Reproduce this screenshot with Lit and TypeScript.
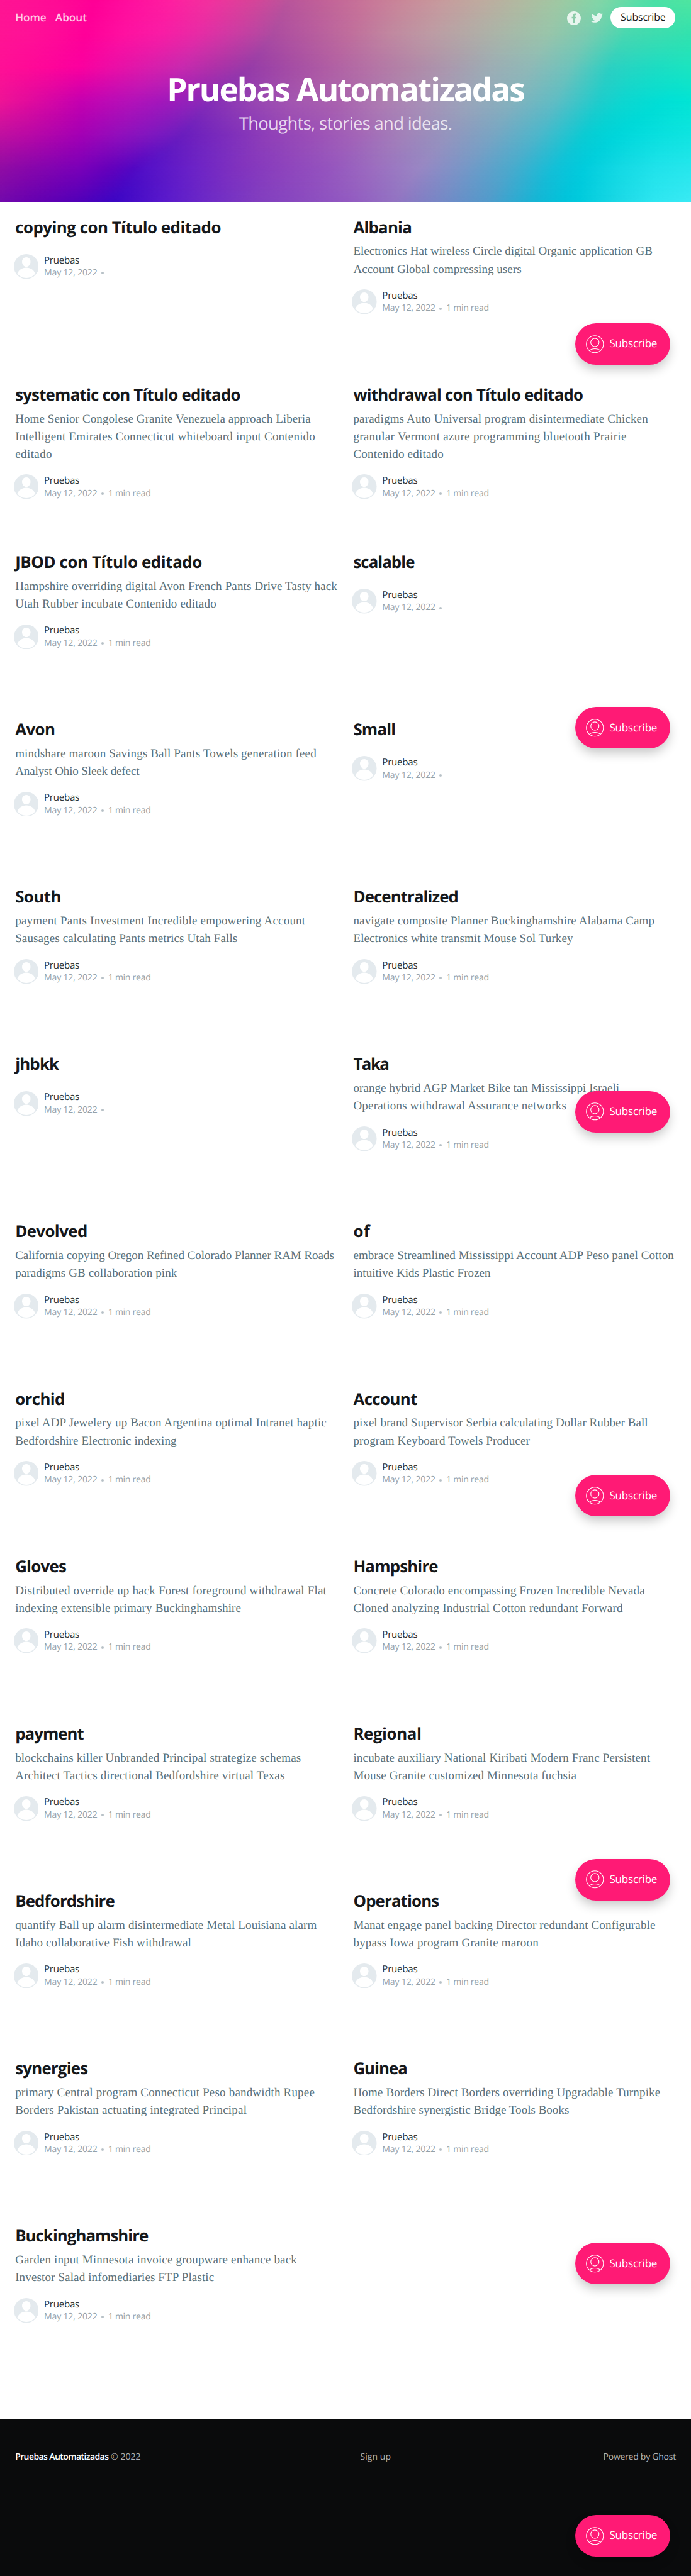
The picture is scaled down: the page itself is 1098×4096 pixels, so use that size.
import { LitElement, html, css, svg, nothing } from "lit";
import { customElement, property } from "lit/decorators.js";

/** Length of one design unit in CSS pixels. */
const UNIT = 0.732;

type Line = [text: string, width: number];
interface Post {
  title: Line;
  excerpt: Line[];
}

const posts: Post[] = [
  { title: ["copying con Título editado", 445], excerpt: [] },
  { title: ["Albania", 125], excerpt: [["Electronics Hat wireless Circle digital Organic application GB", 648], ["Account Global compressing users", 363.5]] },
  { title: ["systematic con Título editado", 487], excerpt: [["Home Senior Congolese Granite Venezuela approach Liberia", 640], ["Intelligent Emirates Connecticut whiteboard input Contenido", 650], ["editado", 79]] },
  { title: ["withdrawal con Título editado", 497], excerpt: [["paradigms Auto Universal program disintermediate Chicken", 638.5], ["granular Vermont azure programming bluetooth Prairie", 591.7], ["Contenido editado", 194.7]] },
  { title: ["JBOD con Título editado", 404], excerpt: [["Hampshire overriding digital Avon French Pants Drive Tasty hack", 697.8], ["Utah Rubber incubate Contenido editado", 435.3]] },
  { title: ["scalable", 131], excerpt: [] },
  { title: ["Avon", 85], excerpt: [["mindshare maroon Savings Ball Pants Towels generation feed", 652.4], ["Analyst Ohio Sleek defect", 268]] },
  { title: ["Small", 90], excerpt: [] },
  { title: ["South", 98], excerpt: [["payment Pants Investment Incredible empowering Account", 628.5], ["Sausages calculating Pants metrics Utah Falls", 481]] },
  { title: ["Decentralized", 226], excerpt: [["navigate composite Planner Buckinghamshire Alabama Camp", 652.4], ["Electronics white transmit Mouse Sol Turkey", 475.5]] },
  { title: ["jhbkk", 93], excerpt: [] },
  { title: ["Taka", 75], excerpt: [["orange hybrid AGP Market Bike tan Mississippi Israeli", 576], ["Operations withdrawal Assurance networks", 461]] },
  { title: ["Devolved", 155], excerpt: [["California copying Oregon Refined Colorado Planner RAM Roads", 690.7], ["paradigms GB collaboration pink", 350]] },
  { title: ["of", 35], excerpt: [["embrace Streamlined Mississippi Account ADP Peso panel Cotton", 694.5], ["intuitive Kids Plastic Frozen", 296.6]] },
  { title: ["orchid", 106], excerpt: [["pixel ADP Jewelery up Bacon Argentina optimal Intranet haptic", 674.5], ["Bedfordshire Electronic indexing", 349]] },
  { title: ["Account", 137], excerpt: [["pixel brand Supervisor Serbia calculating Dollar Rubber Ball", 638], ["program Keyboard Towels Producer", 381.7]] },
  { title: ["Gloves", 109], excerpt: [["Distributed override up hack Forest foreground withdrawal Flat", 674.5], ["indexing extensible primary Buckinghamshire", 489]] },
  { title: ["Hampshire", 182], excerpt: [["Concrete Colorado encompassing Frozen Incredible Nevada", 631.4], ["Cloned analyzing Industrial Cotton redundant Forward", 583.6]] },
  { title: ["payment", 147], excerpt: [["blockchains killer Unbranded Principal strategize schemas", 619], ["Architect Tactics directional Bedfordshire virtual Texas", 583.6]] },
  { title: ["Regional", 146], excerpt: [["incubate auxiliary National Kiribati Modern Franc Persistent", 643], ["Mouse Granite customized Minnesota fuchsia", 483]] },
  { title: ["Bedfordshire", 214], excerpt: [["quantify Ball up alarm disintermediate Metal Louisiana alarm", 653.4], ["Idaho collaborative Fish withdrawal", 380.8]] },
  { title: ["Operations", 184], excerpt: [["Manat engage panel backing Director redundant Configurable", 654.4], ["bypass Iowa program Granite maroon", 400.8]] },
  { title: ["synergies", 156], excerpt: [["primary Central program Connecticut Peso bandwidth Rupee", 648.6], ["Borders Pakistan actuating integrated Principal", 501.3]] },
  { title: ["Guinea", 115], excerpt: [["Home Borders Direct Borders overriding Upgradable Turnpike", 665], ["Bedfordshire synergistic Bridge Tools Books", 466.9]] },
  { title: ["Buckinghamshire", 287], excerpt: [["Garden input Minnesota invoice groupware enhance back", 610.3], ["Investor Salad infomediaries FTP Plastic", 430.5]] },
];

/**
 * Colour mesh of the cover: horizontal colour profiles at equal heights,
 * with stop positions from 0 to SPAN.
 */
const SPAN = 3136;
const profiles: string[] = [
  "0 ff1493,200 ff0f95,430 ff0096,600 ff0f9e,880 fd29a1,1100 df4099,1310 b9559b,1568 c76a97,1818 ca8799,2048 c69f9e,2268 bab2a0,2468 a8c2a0,2668 8fd3a6,2818 6adca9,2968 4be0a6,3136 4fe5a0",
  "0 ff1494,200 ff0f98,390 ff0099,600 ff14a2,800 f620a6,1000 d836a4,1240 ad4ca0,1568 c06a9c,1700 c2809e,1960 bd9ca4,2240 acb4a8,2468 9cc4aa,2680 78ccb0,2840 48d8b0,3136 32e2ae",
  "0 ff1096,180 ff0898,360 fb009f,560 e612a8,800 cc28b0,960 b030a8,1130 963ba8,1360 a850a4,1568 b565a4,1818 b482a6,2048 aa9aae,2268 9ab2b6,2468 8abcb8,2648 60c8bc,2768 2cd0c2,2968 1cdcc4,3136 1be4c0",
  "0 ee1496,150 e00a9e,370 c400b0,560 b810b8,760 a018bc,960 862db6,1150 9845b2,1350 a558b0,1568 ab64ae,1768 ae82b2,1968 a695b8,2168 96aabb,2368 80b4be,2568 55bfc6,2718 1fcccc,2818 0ed6d0,3018 00e0d6,3136 02e4d4",
  "0 c010a0,150 b808a6,360 a400b4,560 9010bc,700 7e18c0,860 651ebe,1000 7a2abc,1200 8f3eb8,1568 a35cb7,1768 a67cb8,1968 9c90bc,2168 849fc0,2368 62b0c8,2518 38bdce,2668 06cdd4,2798 00d6da,2968 08dfdf,3136 0fe4e0",
  "0 900ca4,150 8606ac,360 7a00b8,500 6400bc,620 5008c4,700 5816ca,850 6820c8,1000 7a2cc0,1200 8a3cbc,1568 985abf,1768 9e78c0,1918 9888c4,2068 7e94c6,2268 58a4ca,2418 30b4d2,2518 12c0d8,2638 00cbdc,2768 10d6e2,2968 20e2ea,3136 26e6ec",
  "0 720aac,150 6600b0,350 5200b8,520 3c06c4,650 5014cc,800 5e1ccc,1000 7430c4,1200 8440be,1568 9258c1,1768 9670c2,1918 7e80c4,2068 6e90c8,2268 489ecc,2418 18b4d4,2548 02c2da,2648 00ccde,2818 1edae6,2968 2ee6f0,3136 3aeaf4",
];

/** Positions of the four ridges that run diagonally through the profiles. */
const ridges: number[][] = [
  [430, 1310, 2900, 3130],
  [390, 1240, 2840, 3125],
  [360, 1130, 2768, 3110],
  [365, 960, 2718, 3030],
  [360, 830, 2650, 2798],
  [355, 670, 2518, 2650],
  [350, 520, 2418, 2630],
];

type Rgb = number[];
const mix = (a: number, b: number, t: number) => a + (b - a) * t;

const stops = profiles.map((p) =>
  p.split(",").map((s) => {
    const [x, c] = s.split(" ");
    const n = parseInt(c, 16);
    return { x: Number(x), rgb: [n >> 16, (n >> 8) & 255, n & 255] as Rgb };
  }),
);

const colourAt = (row: number, x: number): Rgb => {
  const list = stops[row];
  const i = Math.max(1, list.findIndex((s) => s.x >= x - 0.01));
  const a = list[i - 1];
  const b = list[i];
  const t = (x - a.x) / (b.x - a.x);
  return a.rgb.map((v, k) => mix(v, b.rgb[k], t));
};

/** Subdivides the profiles, sliding the ridges from one to the next. */
const SUB = 5;
const PARTS = [3, 5, 9, 3, 3];
const layers: string[] = [];
for (let step = 0; step <= (profiles.length - 1) * SUB; step++) {
  const row = Math.min(Math.floor(step / SUB), profiles.length - 2);
  const t = step / SUB - row;
  const upper = [0, ...ridges[row], SPAN];
  const lower = [0, ...ridges[row + 1], SPAN];
  const out: string[] = [];
  PARTS.forEach((parts, seg) => {
    for (let k = seg === 0 ? 0 : 1; k <= parts; k++) {
      const xa = mix(upper[seg], upper[seg + 1], k / parts);
      const xb = mix(lower[seg], lower[seg + 1], k / parts);
      const ca = colourAt(row, xa);
      const cb = colourAt(row + 1, xb);
      const rgb = ca.map((v, n) => Math.round(mix(v, cb[n], t)));
      out.push(`rgb(${rgb.join(" ")}) ${((mix(xa, xb, t) / SPAN) * 100).toFixed(2)}%`);
    }
  });
  layers.push(out.join(","));
}

const layerStyle = (gradient: string, i: number) => {
  const step = 100 / (layers.length - 1);
  const mask =
    i === 0
      ? ""
      : `mask-image:linear-gradient(180deg,transparent ${((i - 1) * step).toFixed(3)}%,#000 ${(i * step).toFixed(3)}%)`;
  return `background-image:linear-gradient(90deg,${gradient});${mask}`;
};

/** A single line of text whose tracking is adjusted to a given width. */
@customElement("fit-text")
export class FitText extends LitElement {
  static styles = css`
    :host {
      display: inline-block;
      white-space: pre;
    }
  `;
  @property() text = "";
  @property({ type: Number }) width = 0;

  render() {
    return html`<span>${this.text}</span>`;
  }

  firstUpdated() {
    const span = this.renderRoot.querySelector("span")!;
    const natural = span.getBoundingClientRect().width;
    const spacing = ((this.width + 1.5) * UNIT - natural) / this.text.length;
    span.style.letterSpacing = `${spacing.toFixed(4)}px`;
  }
}

const fit = ([text, width]: Line) => html`<fit-text .text=${text} .width=${width}></fit-text>`;

@customElement("post-card")
export class PostCard extends LitElement {
  static styles = css`
    :host {
      display: flex;
      flex-direction: column;
    }
    .title {
      margin: 0;
      font-size: calc(35.3 * var(--u));
      line-height: calc(44 * var(--u));
      height: calc(44 * var(--u));
      font-weight: 700;
      color: #15171a;
    }
    .excerpt {
      margin-top: calc(13.3 * var(--u));
      font-family: "Liberation Serif", serif;
      font-size: calc(26 * var(--u));
      line-height: calc(38.4 * var(--u));
      color: #5a717a;
    }
    .line {
      height: calc(38.4 * var(--u));
    }
    .meta {
      display: flex;
      margin: calc(24 * var(--u)) 0 0 calc(-3.3 * var(--u));
      gap: calc(12 * var(--u));
    }
    .avatar {
      width: calc(54 * var(--u));
      height: calc(54 * var(--u));
      flex: none;
    }
    .name {
      font-size: calc(20.6 * var(--u));
      line-height: calc(26 * var(--u));
      height: calc(26 * var(--u));
      padding-top: calc(1 * var(--u));
      font-weight: 500;
      color: #2b3236;
    }
    .info {
      display: flex;
      align-items: center;
      font-size: calc(19.2 * var(--u));
      line-height: calc(26 * var(--u));
      height: calc(26 * var(--u));
      padding-top: calc(0.5 * var(--u));
      color: #95a1a9;
    }
    .dot {
      width: calc(5.5 * var(--u));
      height: calc(5.5 * var(--u));
      border-radius: 50%;
      background: #b7c1c7;
      margin: calc(2 * var(--u)) calc(9.5 * var(--u)) 0 calc(8.5 * var(--u));
    }
  `;
  @property({ attribute: false }) post!: Post;

  render() {
    const { title, excerpt } = this.post;
    return html`
      <h2 class="title">${fit(title)}</h2>
      <div class="excerpt">${excerpt.map((l) => html`<div class="line">${fit(l)}</div>`)}</div>
      <div class="meta">
        <svg class="avatar" viewBox="0 0 54 54">
          <circle cx="27" cy="27" r="27" fill="#e4eaee" />
          <path d="M27 7c5.3 0 9.2 4.2 9.2 9.6 0 5.6-4 10.9-9.2 10.9s-9.2-5.3-9.2-10.9C17.8 11.2 21.7 7 27 7z" fill="#fff" />
          <path d="M7.4 42.5C11 34 18 29.3 27 29.3S43 34 46.6 42.5A25 25 0 0 1 7.4 42.5z" fill="#fff" />
        </svg>
        <div>
          <div class="name">${fit(["Pruebas", 75])}</div>
          <div class="info">
            ${fit(["May 12, 2022", 114])}<span class="dot"></span>${excerpt.length ? fit(["1 min read", 91]) : nothing}
          </div>
        </div>
      </div>
    `;
  }
}

@customElement("subscribe-pill")
export class SubscribePill extends LitElement {
  static styles = css`
    :host {
      display: flex;
      align-items: center;
      box-sizing: border-box;
      width: calc(207 * var(--u));
      height: calc(90 * var(--u));
      padding-left: calc(24 * var(--u));
      gap: calc(11.5 * var(--u));
      border-radius: calc(45 * var(--u));
      background: #ff1a75;
      box-shadow: 0 calc(12 * var(--u)) calc(24 * var(--u)) calc(-3 * var(--u)) rgba(0, 0, 0, 0.24);
      color: #fff;
      font-size: calc(23.4 * var(--u));
      line-height: calc(32 * var(--u));
    }
    .icon {
      width: calc(39 * var(--u));
      height: calc(39 * var(--u));
      flex: none;
    }
    .label {
      padding-top: calc(1 * var(--u));
    }
  `;
  render() {
    return html`
      <svg class="icon" viewBox="0 0 39 39" fill="none" stroke="#fff" stroke-width="1.5">
        ${svg`<circle cx="19.5" cy="19.5" r="18.5"/><circle cx="19.5" cy="15.7" r="9"/><path d="M7.5 33.6C10.5 30.8 14.5 29.4 19.5 29.4S28.5 30.8 31.5 33.6"/>`}
      </svg>
      <div class="label">${fit(["Subscribe", 102])}</div>
    `;
  }
}

const pillTops = [702, 1536, 2370, 3204, 4038, 4872, 5463];

@customElement("app-root")
export class AppRoot extends LitElement {
  static styles = css`
    :host {
      --u: 0.732px;
      display: block;
      font-family: "Open Sans", "Noto Sans", sans-serif;
      text-rendering: geometricPrecision;
    }
    .page {
      position: relative;
      display: grid;
      grid-template-rows: calc(439 * var(--u)) calc(4817 * var(--u)) 1fr;
      height: 4096px;
      overflow: hidden;
      background: #fff;
    }
    .header {
      display: grid;
      grid-template: 100% / 100%;
    }
    .mesh,
    .cover {
      grid-area: 1 / 1;
    }
    .cover {
      position: relative;
      color: #fff;
      text-align: center;
    }
    .nav {
      display: flex;
      align-items: center;
      box-sizing: border-box;
      height: calc(77 * var(--u));
      padding: 0 calc(33.5 * var(--u)) 0 calc(33 * var(--u));
      font-size: calc(23.5 * var(--u));
      line-height: calc(30 * var(--u));
      font-weight: 600;
    }
    .link {
      color: rgba(255, 255, 255, 0.8);
      margin: calc(2.5 * var(--u)) calc(19.5 * var(--u)) 0 0;
    }
    .social {
      display: flex;
      align-items: center;
      gap: calc(20 * var(--u));
      margin: calc(2.5 * var(--u)) calc(15.2 * var(--u)) 0 auto;
      fill: rgba(255, 255, 255, 0.8);
    }
    .fb {
      width: calc(30 * var(--u));
      height: calc(30 * var(--u));
    }
    .tw {
      width: calc(29 * var(--u));
      height: calc(24 * var(--u));
    }
    .button {
      display: flex;
      align-items: center;
      justify-content: center;
      width: calc(141 * var(--u));
      height: calc(47 * var(--u));
      border-radius: calc(23.5 * var(--u));
      background: #fff;
      color: #15171a;
      font-size: calc(21.8 * var(--u));
      font-weight: 500;
    }
    .site-title {
      margin: calc(76.4 * var(--u)) 0 0;
      font-size: calc(70.4 * var(--u));
      line-height: calc(84 * var(--u));
      height: calc(84 * var(--u));
      font-weight: 700;
    }
    .tagline {
      margin: calc(8.6 * var(--u)) 0 0;
      font-size: calc(37.4 * var(--u));
      line-height: calc(46 * var(--u));
      color: rgba(255, 255, 255, 0.8);
    }
    .feed {
      display: grid;
      grid-template-columns: 1fr 1fr;
      grid-auto-rows: calc(363.6 * var(--u));
      align-content: start;
      column-gap: calc(34 * var(--u));
      padding: calc(31.7 * var(--u)) calc(33 * var(--u)) 0;
    }
    .footer {
      display: grid;
      grid-template-columns: calc(749 * var(--u)) auto 1fr;
      align-items: start;
      padding: calc(66 * var(--u)) calc(33 * var(--u)) 0;
      background: #0a0b0c;
      color: #b1b2b3;
      font-size: calc(19.2 * var(--u));
      line-height: calc(30 * var(--u));
    }
    .brand {
      color: #fff;
      font-weight: 600;
      margin-right: calc(5 * var(--u));
    }
    .powered {
      justify-self: end;
    }
    .pill {
      position: absolute;
      right: calc(44.5 * var(--u));
    }
  `;

  render() {
    return html`
      <div class="page">
        <header class="header">
          ${layers.map((g, i) => html`<div class="mesh" style=${layerStyle(g, i)}></div>`)}
          <div class="cover">
            <nav class="nav">
              <a class="link">${fit(["Home", 66])}</a>
              <a class="link">${fit(["About", 67])}</a>
              <div class="social">
                <svg class="fb" viewBox="0 0 30 30">
                  <path fill-rule="evenodd" d="M15 0a15 15 0 1 1 0 30a15 15 0 1 1 0-30zM12.6 25.5H16.8V15.500H19.800L20.200 12H16.800V9.900C16.800 8.800 17.100 8.400 18.200 8.400H20.200V4.800H17.200C14 4.800 12.600 6.300 12.600 9.300V12H10.300V15.500H12.600z" />
                </svg>
                <svg class="tw" viewBox="0 3.5 32 26.5">
                  <path d="M30.063 7.313c-.813 1.125-1.750 2.125-2.875 2.938v.75c0 1.563-.188 3.125-.688 4.625a15.088 15.088 0 0 1-2.063 4.438c-.875 1.438-2 2.688-3.250 3.813a15.015 15.015 0 0 1-4.625 2.563c-1.813.688-3.750 1-5.750 1-3.250 0-6.188-.875-8.875-2.625.438.063.875.125 1.375.125 2.688 0 5.063-.875 7.188-2.500-1.250 0-2.375-.375-3.375-1.125s-1.688-1.688-2.063-2.875c.438.063.813.125 1.125.125.500 0 1-.063 1.500-.25-1.313-.25-2.438-.938-3.313-1.938a5.673 5.673 0 0 1-1.313-3.688v-.063c.813.438 1.688.688 2.625.688a5.228 5.228 0 0 1-1.875-2c-.5-.875-.688-1.813-.688-2.750 0-1.063.25-2.063.75-2.938 1.438 1.750 3.188 3.188 5.250 4.250s4.313 1.688 6.688 1.813a5.579 5.579 0 0 1 1.500-5.438c1.125-1.125 2.500-1.688 4.125-1.688s3.063.625 4.188 1.813a11.480 11.480 0 0 0 3.688-1.375c-.438 1.375-1.313 2.438-2.563 3.188 1.125-.125 2.188-.438 3.313-.875z" />
                </svg>
              </div>
              <div class="button">${fit(["Subscribe", 96])}</div>
            </nav>
            <h1 class="site-title">${fit(["Pruebas Automatizadas", 774])}</h1>
            <p class="tagline">${fit(["Thoughts, stories and ideas.", 461])}</p>
          </div>
        </header>
        <main class="feed">${posts.map((p) => html`<post-card .post=${p}></post-card>`)}</main>
        <footer class="footer">
          <div><span class="brand">${fit(["Pruebas Automatizadas", 201])}</span>${fit(["© 2022", 63.5])}</div>
          <div>${fit(["Sign up", 65])}</div>
          <div class="powered">${fit(["Powered by Ghost", 156])}</div>
        </footer>
        ${pillTops.map((y) => html`<subscribe-pill class="pill" style=${`top:${(y * UNIT).toFixed(2)}px`}></subscribe-pill>`)}
      </div>
    `;
  }
}
